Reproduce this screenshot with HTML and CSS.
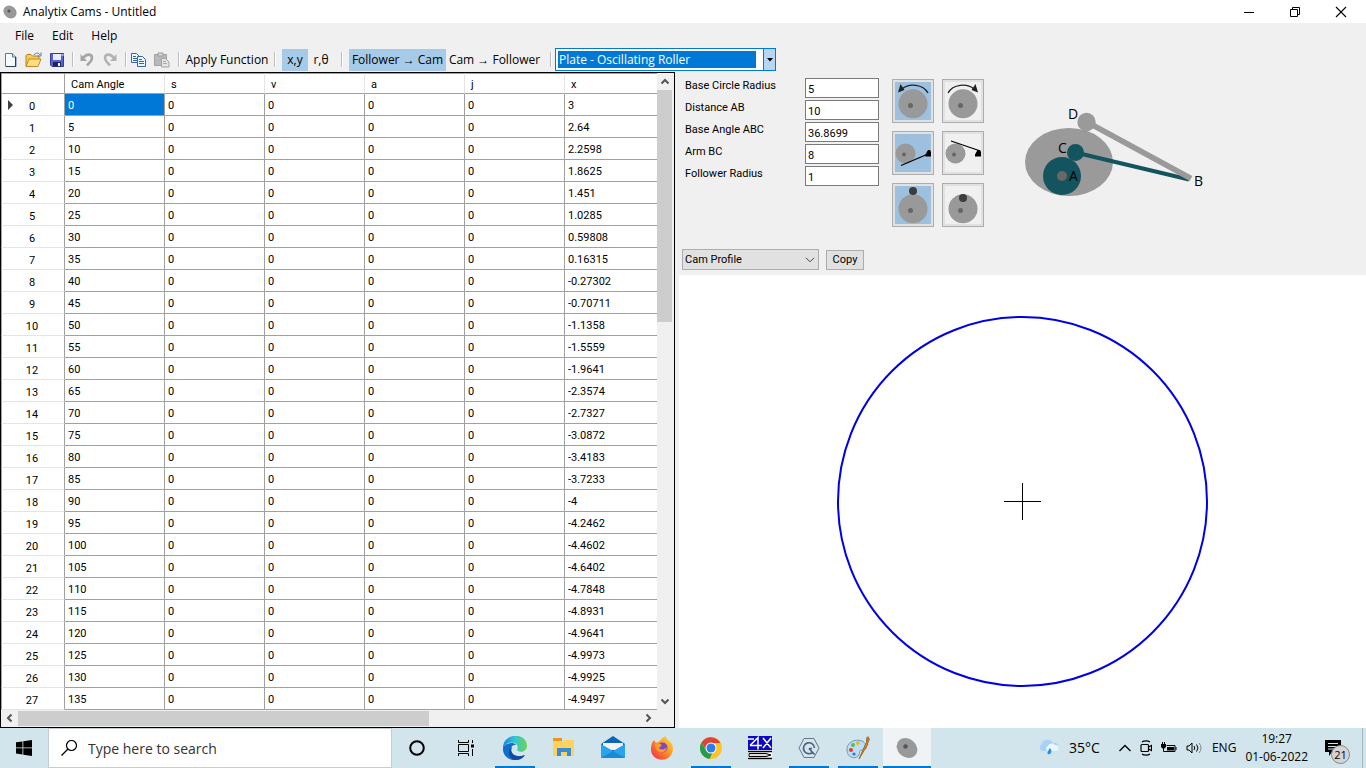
FILE: index.html
```html
<!DOCTYPE html>
<html lang="en">
<head>
<meta charset="utf-8">
<title>Analytix Cams - Untitled</title>
<link rel="stylesheet" href="styles.css">
</head>
<body>
<header class="titlebar">
  <svg class="app-icon" width="14" height="14" viewBox="0 0 14 14"><ellipse cx="7" cy="7" rx="7" ry="6" transform="rotate(40 7 7)" fill="#999"/><circle cx="6" cy="6" r="1.6" fill="#555"/></svg>
  <h1 class="title">Analytix Cams - Untitled</h1>
  <div class="window-buttons">
    <button aria-label="Minimize"><svg width="12" height="12" viewBox="0 0 12 12"><path d="M1 6.5h10" stroke="#000"/></svg></button>
    <button aria-label="Restore"><svg width="12" height="12" viewBox="0 0 12 12" fill="none" stroke="#000"><path d="M1.5 3.5h7v7h-7zM3.500 3V1.500h7v7H9"/></svg></button>
    <button aria-label="Close"><svg width="12" height="12" viewBox="0 0 12 12"><path d="M1 1l10 10M11 1L1 11" stroke="#000" stroke-width="1.1"/></svg></button>
  </div>
</header>
<nav class="menubar"><button>File</button><button>Edit</button><button>Help</button></nav>
<div class="toolbar">
  <div class="tool-group files">
    <button aria-label="New"><svg width="16" height="16" viewBox="0 0 16 16"><path d="M2.500 1.500h7l3.500 3.500v9.500H2.500z" fill="#f6fbff" stroke="#5d7890"/><path d="M9.500 1.500V5H13" fill="#cfe0ee" stroke="#5d7890"/><path d="M12.500 5v9.500H3" fill="none" stroke="#24415c"/></svg></button>
    <button aria-label="Open"><svg width="18" height="16" viewBox="0 0 18 16"><path d="M1 14V3.500l1-1h4l1.500 1.500H14v3" fill="#f5c95a" stroke="#b98218"/><path d="M1 14.500L4 7h12l-3 7.500z" fill="#ffdd82" stroke="#c28b1c"/><path d="M9 3c2-3 5-2 6 0M16 .5V4h-3.500" fill="none" stroke="#507da7"/></svg></button>
    <button aria-label="Save"><svg width="16" height="16" viewBox="0 0 16 16"><path d="M1.500 1.500h13v13H3l-1.500-1.500z" fill="#5963ce" stroke="#343b9b"/><path d="M4 2h8v6H4z" fill="#e5ecfb"/><path d="M4 10h8v4.500H4z" fill="#1c245f"/><path d="M9 11h2v3H9z" fill="#fff"/><path d="M12.500 2h2v2h-2z" fill="#aeb8ff"/></svg></button>
  </div>
  <span class="sep"></span>
  <div class="tool-group history">
    <button aria-label="Undo"><svg width="16" height="16" viewBox="0 0 16 16"><path d="M4 6c4-5 9-4 9 0 0 3-2 4-5 7.500" fill="none" stroke="#a5a5a5" stroke-width="2.600"/><path d="M1.500 2v7h6.500z" fill="#a5a5a5"/></svg></button>
    <button aria-label="Redo"><svg width="16" height="16" viewBox="0 0 16 16"><path d="M12 6C8 1 3 2 3 6c0 3 2 4 5 7.500" fill="none" stroke="#b3b3b3" stroke-width="2.600"/><path d="M14.500 2v7H8z" fill="#b3b3b3"/></svg></button>
  </div>
  <span class="sep"></span>
  <div class="tool-group clip">
    <button aria-label="Copy cells"><svg width="16" height="16" viewBox="0 0 16 16" stroke="#3267a8"><path d="M.5 1.500h5l3 3v6h-8z" fill="#eef6ff"/><path d="M2 4.500h3M2 6.500h4M2 8.500h4" fill="none"/><path d="M6.500 4.500h5l3 3v7h-8z" fill="#eef6ff"/><path d="M8 7.500h3M8 9.500h5M8 11.500h5" fill="none"/></svg></button>
    <button aria-label="Paste"><svg width="16" height="16" viewBox="0 0 16 16"><path d="M.5 2.500h12v11h-12z" fill="#b9b9b9" stroke="#a4a4a4"/><path d="M4 1h5v3H4z" fill="#ddd" stroke="#999"/><path d="M7.500 6.500h4l3.500 3.500v5H7.500z" fill="#e4e4e4" stroke="#a4a4a4"/><path d="M9 9.500h3M9 11.500h4" stroke="#aaa"/></svg></button>
  </div>
  <span class="sep"></span>
  <button class="text-tool apply">Apply Function</button>
  <span class="sep"></span>
  <div class="tool-group coords"><button class="text-tool on">x,y</button><button class="text-tool">r,θ</button></div>
  <span class="sep"></span>
  <div class="tool-group direction"><button class="text-tool on">Follower → Cam</button><button class="text-tool">Cam → Follower</button></div>
  <span class="sep"></span>
  <div class="combo">
    <select aria-label="Cam type"><option>Plate - Oscillating Roller</option></select>
    <span class="combo-arrow"><svg width="6" height="4" viewBox="0 0 6 4"><path d="M0 0h6L3 3.500z"/></svg></span>
  </div>
</div>
<main class="workspace">
  <section class="sheet">
    <div class="sheet-view">
      <table class="grid">
        <colgroup><col class="index-col"><col class="value-col"><col class="value-col"><col class="value-col"><col class="value-col"><col class="value-col"><col></colgroup>
        <thead><tr><td></td><th scope="col">Cam Angle</th><th scope="col">s</th><th scope="col">v</th><th scope="col">a</th><th scope="col">j</th><th scope="col">x</th></tr></thead>
        <tbody>
<tr class="current"><th scope="row">0</th><td class="selected">0</td><td>0</td><td>0</td><td>0</td><td>0</td><td>3</td></tr>
<tr><th scope="row">1</th><td>5</td><td>0</td><td>0</td><td>0</td><td>0</td><td>2.64</td></tr>
<tr><th scope="row">2</th><td>10</td><td>0</td><td>0</td><td>0</td><td>0</td><td>2.2598</td></tr>
<tr><th scope="row">3</th><td>15</td><td>0</td><td>0</td><td>0</td><td>0</td><td>1.8625</td></tr>
<tr><th scope="row">4</th><td>20</td><td>0</td><td>0</td><td>0</td><td>0</td><td>1.451</td></tr>
<tr><th scope="row">5</th><td>25</td><td>0</td><td>0</td><td>0</td><td>0</td><td>1.0285</td></tr>
<tr><th scope="row">6</th><td>30</td><td>0</td><td>0</td><td>0</td><td>0</td><td>0.59808</td></tr>
<tr><th scope="row">7</th><td>35</td><td>0</td><td>0</td><td>0</td><td>0</td><td>0.16315</td></tr>
<tr><th scope="row">8</th><td>40</td><td>0</td><td>0</td><td>0</td><td>0</td><td>-0.27302</td></tr>
<tr><th scope="row">9</th><td>45</td><td>0</td><td>0</td><td>0</td><td>0</td><td>-0.70711</td></tr>
<tr><th scope="row">10</th><td>50</td><td>0</td><td>0</td><td>0</td><td>0</td><td>-1.1358</td></tr>
<tr><th scope="row">11</th><td>55</td><td>0</td><td>0</td><td>0</td><td>0</td><td>-1.5559</td></tr>
<tr><th scope="row">12</th><td>60</td><td>0</td><td>0</td><td>0</td><td>0</td><td>-1.9641</td></tr>
<tr><th scope="row">13</th><td>65</td><td>0</td><td>0</td><td>0</td><td>0</td><td>-2.3574</td></tr>
<tr><th scope="row">14</th><td>70</td><td>0</td><td>0</td><td>0</td><td>0</td><td>-2.7327</td></tr>
<tr><th scope="row">15</th><td>75</td><td>0</td><td>0</td><td>0</td><td>0</td><td>-3.0872</td></tr>
<tr><th scope="row">16</th><td>80</td><td>0</td><td>0</td><td>0</td><td>0</td><td>-3.4183</td></tr>
<tr><th scope="row">17</th><td>85</td><td>0</td><td>0</td><td>0</td><td>0</td><td>-3.7233</td></tr>
<tr><th scope="row">18</th><td>90</td><td>0</td><td>0</td><td>0</td><td>0</td><td>-4</td></tr>
<tr><th scope="row">19</th><td>95</td><td>0</td><td>0</td><td>0</td><td>0</td><td>-4.2462</td></tr>
<tr><th scope="row">20</th><td>100</td><td>0</td><td>0</td><td>0</td><td>0</td><td>-4.4602</td></tr>
<tr><th scope="row">21</th><td>105</td><td>0</td><td>0</td><td>0</td><td>0</td><td>-4.6402</td></tr>
<tr><th scope="row">22</th><td>110</td><td>0</td><td>0</td><td>0</td><td>0</td><td>-4.7848</td></tr>
<tr><th scope="row">23</th><td>115</td><td>0</td><td>0</td><td>0</td><td>0</td><td>-4.8931</td></tr>
<tr><th scope="row">24</th><td>120</td><td>0</td><td>0</td><td>0</td><td>0</td><td>-4.9641</td></tr>
<tr><th scope="row">25</th><td>125</td><td>0</td><td>0</td><td>0</td><td>0</td><td>-4.9973</td></tr>
<tr><th scope="row">26</th><td>130</td><td>0</td><td>0</td><td>0</td><td>0</td><td>-4.9925</td></tr>
<tr><th scope="row">27</th><td>135</td><td>0</td><td>0</td><td>0</td><td>0</td><td>-4.9497</td></tr>
        </tbody>
      </table>
    </div>
    <div class="vscroll">
      <svg class="arrow" viewBox="0 0 16 16"><path d="M4.500 10L8 6.500l3.500 3.500" /></svg>
      <div class="track"><div class="thumb"></div></div>
      <svg class="arrow" viewBox="0 0 16 16"><path d="M4.500 6L8 9.500 11.500 6"/></svg>
    </div>
    <div class="hscroll">
      <svg class="arrow" viewBox="0 0 16 16"><path d="M10 4.500L6.500 8l3.500 3.500"/></svg>
      <div class="track"><div class="thumb"></div></div>
      <svg class="arrow" viewBox="0 0 16 16"><path d="M6 4.500L9.500 8 6 11.500"/></svg>
    </div>
  </section>
  <section class="design">
    <div class="settings">
      <form class="params">
        <label for="base-radius">Base Circle Radius</label><input id="base-radius" value="5">
        <label for="distance">Distance AB</label><input id="distance" value="10">
        <label for="base-angle">Base Angle ABC</label><input id="base-angle" value="36.8699">
        <label for="arm">Arm BC</label><input id="arm" value="8">
        <label for="follower-radius">Follower Radius</label><input id="follower-radius" value="1">
      </form>
      <div class="modes">
        <button class="on" aria-label="Rotate counterclockwise"><svg viewBox="0 0 36 38"><circle cx="18" cy="21.700" r="14.500" fill="#999"/><circle cx="15.500" cy="23.500" r="2.500" fill="#666662"/><path d="M33 11C28 2 14 1 7 7" fill="none" stroke="#222" stroke-width="1.300"/><path d="M3 10.500L5.500 2l4 6z" fill="#222"/></svg></button>
        <button aria-label="Rotate clockwise"><svg viewBox="0 0 36 38"><circle cx="18" cy="21.700" r="14.500" fill="#999"/><circle cx="15.500" cy="23.500" r="2.500" fill="#666662"/><path d="M3 11C8 2 22 1 29 7" fill="none" stroke="#222" stroke-width="1.300"/><path d="M33 10.500L30.500 2l-4 6z" fill="#222"/></svg></button>
        <button class="on" aria-label="Arm rising"><svg viewBox="0 0 36 38"><circle cx="10.500" cy="19.500" r="10" fill="#999"/><circle cx="9" cy="20.500" r="2" fill="#666662"/><path d="M6 31.500L33 20" stroke="#000" stroke-width="1.300"/><path d="M33 16h2l1 2v4.500h-5.500v-2z"/></svg></button>
        <button aria-label="Arm falling"><svg viewBox="0 0 36 38"><circle cx="10.500" cy="19.500" r="10" fill="#999"/><circle cx="9" cy="20.500" r="2" fill="#666662"/><path d="M6 7l28 9.500" stroke="#000" stroke-width="1.300"/><path d="M32.500 16h2.500l1 2v4.500h-6v-2z"/></svg></button>
        <button class="on" aria-label="External follower"><svg viewBox="0 0 36 38"><circle cx="18" cy="22.700" r="14.500" fill="#999"/><circle cx="15.500" cy="24.500" r="2.500" fill="#666662"/><circle cx="18" cy="5" r="4" fill="#3c3c3c"/></svg></button>
        <button aria-label="Internal follower"><svg viewBox="0 0 36 38"><circle cx="18" cy="22.700" r="14.500" fill="#999"/><circle cx="15.500" cy="24.500" r="2.500" fill="#666662"/><circle cx="18" cy="12" r="4" fill="#3c3c3c"/></svg></button>
      </div>
      <svg class="diagram" width="220" height="120" viewBox="0 0 220 120">
        <ellipse cx="59" cy="72" rx="44" ry="34" fill="#9a9a9a"/>
        <circle cx="52" cy="86" r="19" fill="#14545e"/><circle cx="52" cy="86" r="5" fill="#686864"/>
        <path d="M65.500 62.500L179 89.500" stroke="#14545e" stroke-width="4"/><circle cx="65.500" cy="62.500" r="8.500" fill="#14545e"/>
        <path d="M77 32L181 88.500" stroke="#9a9a9a" stroke-width="5.500"/><circle cx="76.500" cy="32" r="9.200" fill="#9a9a9a"/>
        <text x="58" y="29">D</text><text x="48" y="63">C</text><text x="59" y="91">A</text><text x="184" y="96">B</text>
      </svg>
    </div>
    <div class="plot-bar">
      <div class="plot-select"><select aria-label="Plot"><option>Cam Profile</option></select><svg width="10" height="6" viewBox="0 0 10 6"><path d="M1 .8l4 4 4-4" fill="none" stroke="#444"/></svg></div>
      <button class="copy">Copy</button>
    </div>
    <div class="plot">
      <svg viewBox="0 0 687 453"><circle cx="343.500" cy="226.500" r="184.500" fill="none" stroke="#0000e6" stroke-width="2"/><path d="M325 226.500h37M343.500 208v37" stroke="#000"/></svg>
    </div>
  </section>
</main>
<footer class="taskbar">
  <button class="start" aria-label="Start"><svg width="16" height="16" viewBox="0 0 16 16"><path d="M0 2.300l6.500-.9v6.100H0zM7.300 1.300L16 0v7.500H7.300zM0 8.300h6.500v6.200L0 13.600zM7.300 8.300H16V16l-8.700-1.300z"/></svg></button>
  <label class="search"><svg width="16" height="16" viewBox="0 0 16 16" fill="none" stroke="#000" stroke-width="1.200"><circle cx="10.500" cy="5.500" r="5"/><path d="M7 9L.5 15.500"/></svg><input aria-label="Search" placeholder="Type here to search"></label>
  <div class="apps">
    <button class="app" aria-label="Cortana"><svg width="24" height="24" viewBox="0 0 24 24"><circle cx="12" cy="12" r="6.800" fill="none" stroke="#000" stroke-width="2"/></svg></button>
    <button class="app" aria-label="Task view"><svg width="24" height="24" viewBox="0 0 24 24" fill="none" stroke="#000"><path d="M4.500 4v2.500h10V4M4.500 8.500h10v7h-10zM4.500 20v-2.500h10V20M18.500 4v3M18.500 13v7"/><path d="M17 8.500h3v3h-3z" fill="#000" stroke="none"/></svg></button>
    <button class="app running" aria-label="Edge"><svg width="24" height="24" viewBox="0 0 24 24"><defs><linearGradient id="edge-top"><stop stop-color="#1689d8"/><stop offset=".5" stop-color="#35c4d6"/><stop offset="1" stop-color="#6bd54c"/></linearGradient></defs><path d="M0 12C0-4 24-4 24 10c0 5-6 7-9 5-2-2 1-3-1-6C11 5 3 6 0 12z" fill="url(#edge-top)"/><path d="M0 12c1-4 10-7 13-3-5-1-7 5-3 9 4 3 9 2 12 1-6 10-23 5-22-7z" fill="#0c70cc"/><path d="M9 11c-3 7 4 12 13 8-4 6-14 7-16-1 0-3 1-6 3-7z" fill="#11479c"/></svg></button>
    <button class="app" aria-label="File Explorer"><svg width="24" height="24" viewBox="0 0 24 24"><path d="M1 2h9v4H1z" fill="#e8961e"/><path d="M1 5h10l2-1h9v16H1z" fill="#ffd25e"/><path d="M5 20v-8h14v8h-4v-4H9v4z" fill="#388bd5"/></svg></button>
    <button class="app" aria-label="Mail"><svg width="24" height="24" viewBox="0 0 24 24"><path d="M0 8l12-8 12 8v14H0z" fill="#0b64b5"/><path d="M2 7h20v7H2z" fill="#f4f4f4"/><path d="M0 8l12 7 12-7v14H0z" fill="#2aa3ea"/><path d="M0 22l12-7 12 7z" fill="#168bd8"/></svg></button>
    <button class="app" aria-label="Firefox"><svg width="24" height="24" viewBox="0 0 24 24"><defs><linearGradient id="fire" x1="1" y1="0" x2="0" y2="1"><stop stop-color="#ffe63d"/><stop offset=".5" stop-color="#ff8a22"/><stop offset="1" stop-color="#ee2258"/></linearGradient></defs><path d="M4 4l2 3 4-2c1-2 3-4 6-5-1 4 7 5 7 12 0 16-22 15-22 1 0-4 1-7 3-9z" fill="url(#fire)"/><circle cx="12.500" cy="11.500" r="5" fill="#7649cf"/><path d="M5 8c4-2 5 0 7 1l-3 3c3 3 6 1 8-1-1 8-12 7-12-3z" fill="#ff9a29"/></svg></button>
    <button class="app running" aria-label="Chrome"><svg width="22" height="22" viewBox="0 0 22 22"><circle cx="11" cy="11" r="11" fill="#fbc52a"/><path d="M1.500 5.500A11 11 0 0 1 20.500 6H11l-4.500 7z" fill="#df4335"/><path d="M1.500 5.500L6.500 14l6 1.500L9.500 22A11 11 0 0 1 1.500 5.500z" fill="#249b4e"/><circle cx="11" cy="11" r="5.500" fill="#fff"/><circle cx="11" cy="11" r="4.500" fill="#2f7cec"/></svg></button>
    <button class="app" aria-label="Analytix 4x"><svg width="24" height="24" viewBox="0 0 24 24"><path d="M0 0h24v24H0z" fill="#fff"/><path d="M0 0h24v14H0z" fill="#0909ca"/><path d="M0 3h6M2 9.500L10 1.500v12M2 9.500h12M15 2l8 10M23 2l-8 10" fill="none" stroke="#fff" stroke-width="1.500"/><path d="M0 15.500h24M0 22.500h24" stroke="#000" stroke-width="1.500"/><path d="M1 17.500h17l5 1.500-5 1.500H1z" fill="#ddd" stroke="#000"/></svg></button>
    <button class="app running" aria-label="Q application"><svg width="22" height="22" viewBox="0 0 22 22"><path d="M6 1.500h10L21 11l-5 9.500H6L1 11z" fill="#d4e4f2" stroke="#66798b"/><path d="M14.500 15.500a5.500 5.500 0 1 1 2-4.500M11 11.500l5.500 6M11 11.500h3" fill="none" stroke="#526476" stroke-width="1.700"/></svg></button>
    <button class="app running" aria-label="Paint"><svg width="24" height="24" viewBox="0 0 24 24"><path d="M1 14C0 7 9 2 16 5c6 3 6 9 0 9-4 0-1 3-4 6C8 24 1 21 1 14z" fill="#b9def5" stroke="#699fc4"/><circle cx="5" cy="14" r="2" fill="#e13e38"/><circle cx="7" cy="9" r="2" fill="#64b943"/><circle cx="12" cy="7" r="2" fill="#f4b52b"/><circle cx="8" cy="18" r="1.600" fill="#3874d4"/><path d="M13 23l7-16 2 1z" fill="#d58b29" stroke="#a7661c"/><path d="M20 8V2l2-2 2 3-2 5z" fill="#ad7641"/></svg></button>
    <button class="app running active" aria-label="Analytix Cams"><svg width="22" height="22" viewBox="0 0 22 22"><ellipse cx="11" cy="11" rx="11" ry="9.300" transform="rotate(40 11 11)" fill="#999"/><circle cx="9.500" cy="9.500" r="2.200" fill="#555"/></svg></button>
  </div>
  <div class="tray">
    <button class="weather"><svg width="20" height="18" viewBox="0 0 20 18"><circle cx="7" cy="6" r="5.500" fill="#c4ddf7"/><path d="M3 12a4 4 0 0 1 0-7 6 6 0 0 1 11-1 4 4 0 0 1 2 8z" fill="#a8d1f4"/><path d="M8 12a3 3 0 0 1 1-5 4 4 0 0 1 7-1 3 3 0 0 1 1 6z" fill="#eaf5fe"/><path d="M11 9c5 6-5 9-2 3z" fill="#2493e5"/></svg>35°C</button>
    <button aria-label="Show hidden icons"><svg width="12" height="8" viewBox="0 0 12 8"><path d="M.5 7L6 1.500 11.500 7" fill="none" stroke="#000" stroke-width="1.300"/></svg></button>
    <button aria-label="Meet now"><svg width="12" height="16" viewBox="0 0 12 16" fill="none" stroke="#000" stroke-width="1.200"><rect x="1" y="4.500" width="7.500" height="7" rx="1"/><path d="M8.500 7l3-1.500v5L8.500 9M2 2c2-1.500 6-1.500 8 0M2 14c2 1.500 6 1.500 8 0"/></svg></button>
    <button aria-label="Battery"><svg width="16" height="14" viewBox="0 0 16 14"><path d="M5.500 4.500h8.500v6H4.500" fill="none" stroke="#000"/><path d="M6 6h7v3.500H6zM14.500 6h1v3h-1zM0 3h5v3L3.500 7.500h-2L0 6z"/><path d="M1.500 1v3M3.500 1v3M2.500 7v3.500H5" fill="none" stroke="#000"/></svg></button>
    <button aria-label="Volume"><svg width="17" height="14" viewBox="0 0 17 14" fill="none" stroke="#000"><path d="M1 5h2l3-3v10L3 9H1zM8 5q1.500 2 0 4M10.500 3.500q3 3.500 0 7"/><path d="M13 2q4 5 0 10" stroke="#789"/></svg></button>
    <button class="language">ENG</button>
    <button class="clock"><span>19:27</span><span>01-06-2022</span></button>
    <button class="notices" aria-label="21 notifications"><svg width="16" height="16" viewBox="0 0 16 16"><path d="M0 0h16v12H7l-3 4v-4H0z"/><path d="M3 3.500h10M3 6.500h10M3 9h6" stroke="#d3e5ec"/></svg><span class="badge">21</span></button>
  </div>
</footer>
</body>
</html>
```

FILE: styles.css
```css
* { box-sizing: border-box; }
body { margin: 0; height: 100vh; display: flex; flex-direction: column; overflow: hidden; background: #f0f0f0; color: #000; font: 12px/16px "Open Sans", "Noto Sans", sans-serif; }
button { margin: 0; padding: 0; border: 0; background: none; color: inherit; font: inherit; display: flex; align-items: center; justify-content: center; white-space: nowrap; }
svg { display: block; flex: none; }
select, input { font: inherit; color: inherit; min-width: 0; }

.titlebar { height: 23px; flex: none; display: flex; align-items: center; padding: 0 2px 0 3px; gap: 6px; background: #fff; }
.title { margin: 0; font-size: 12px; font-weight: 400; flex: 1; }
.window-buttons { display: flex; }
.window-buttons button { width: 46px; height: 22px; }

.menubar { height: 24px; flex: none; display: flex; align-items: center; gap: 18px; padding: 1px 0 0 15px; }

.toolbar { height: 25px; flex: none; display: flex; align-items: center; padding: 0 3px; }
.tool-group { display: flex; align-items: center; }
.files { gap: 6px; width: 69px; }
.history { gap: 7px; padding-left: 5px; width: 51px; }
.clip { gap: 7px; padding-left: 4px; width: 51px; }
.sep { width: 2px; height: 15px; flex: none; border-left: 1px solid #bdbdbd; border-right: 1px solid #fff; }
.text-tool { height: 22px; }
.apply { width: 94px; }
.coords { padding-left: 6px; width: 65px; }
.coords button { width: 26px; }
.direction { padding-left: 6px; width: 207px; }
.direction button { width: 97px; }
.on { background: #a6cbe9; }
.combo { width: 221px; height: 23px; margin-left: 3px; display: flex; border: 1px solid #0078d7; background: #fff; }
.combo select { appearance: none; flex: 1; margin: 2px 7px 2px 2px; padding: 1px 1px 0; border: 0; border-radius: 0; background: #0078d7; color: #fff; line-height: 16px; }
.combo-arrow { width: 12px; display: flex; align-items: center; justify-content: center; background: #b5d7f3; border-left: 1px solid #0078d7; }

.workspace { flex: 1; min-height: 0; display: grid; grid-template-columns: minmax(0, 675fr) minmax(0, 691fr); grid-template-rows: minmax(0, 1fr); font: 11px/16px Roboto, "Liberation Sans", sans-serif; }
.sheet { border: 1px solid #000; display: grid; grid-template-columns: minmax(0, 1fr) 17px; grid-template-rows: minmax(0, 1fr) 17px; background: #f0f0f0; }
.sheet-view { overflow: hidden; background: #fff; }
.grid { width: 100%; table-layout: fixed; border-collapse: separate; border-spacing: 0; }
.index-col { width: 64px; }
.value-col { width: 100px; }
.grid td, .grid th { height: 22px; padding: 2px 3px 0; border-right: 1px solid #a0a0a0; border-bottom: 1px solid #a0a0a0; text-align: left; font-weight: 400; line-height: 16px; }
.grid thead th, .grid thead td { height: 21px; padding-left: 6px; border-top: 1px solid #a0a0a0; }
.grid thead th { border-right-color: #e5e5e5; }
.grid thead td { border-left: 1px solid #a0a0a0; }
.grid tbody th { padding: 5px 2px 0 0; text-align: center; border-bottom-color: #e5e5e5; border-left: 1px solid #a0a0a0; }
.grid tr > :last-child { border-right: 0; }
.grid .selected { background: #0078d7; color: #fff; }
.current th { position: relative; }
.current th::before { content: ""; position: absolute; left: 6px; top: 6px; border: 5px solid transparent; border-left-color: #404040; border-right: 0; }
.vscroll { display: flex; flex-direction: column; }
.hscroll { grid-column: 1; display: flex; }
.arrow { width: 17px; height: 16px; fill: none; stroke: #555; stroke-width: 2; }
.vscroll .arrow { width: 16px; height: 17px; }
.track { flex: 1; }
.thumb { background: #cdcdcd; }
.vscroll .thumb { height: 38.4%; margin-right: 2px; }
.hscroll .thumb { width: 66%; height: 15px; margin-top: 1px; }

.design { display: flex; flex-direction: column; min-width: 0; }
.settings { flex: none; height: 172px; display: flex; align-items: flex-start; padding: 6px 0 0 10px; }
.params { display: grid; grid-template-columns: 120px 74px; grid-auto-rows: 20px; row-gap: 2px; margin-right: 13px; }
.params input { height: 20px; padding: 2px 2px 0; border: 1px solid #7a7a7a; border-radius: 0; background: #fff; }
.modes { display: grid; grid-template-columns: 42px 42px; gap: 8px; padding-top: 1px; margin-right: 26px; }
.modes button { height: 44px; border: 1px solid #adadad; background: #e1e1e1; }
.modes svg { width: 36px; height: 38px; background: #f0f0f0; }
.modes .on svg { background: #9cc0de; }
.diagram { margin-top: 12px; font: 14px "Open Sans", sans-serif; }
.plot-bar { flex: none; height: 31px; display: flex; align-items: center; gap: 7px; padding: 0 7px; }
.plot-select { width: 137px; height: 21px; display: flex; align-items: center; padding-right: 3px; border: 1px solid #adadad; background: #e1e1e1; }
.plot-select select { appearance: none; flex: 1; height: 19px; padding: 1px 2px 0; border: 0; background: none; }
.copy { width: 38px; height: 20px; padding-top: 1px; border: 1px solid #adadad; background: #e1e1e1; }
.plot { flex: 1; min-height: 0; margin-left: 4px; background: #fff; }
.plot svg { width: 100%; height: 100%; }

.taskbar { height: 40px; flex: none; display: flex; background: #d2e5ec; }
.start { width: 48px; }
.search { flex: 0 1 344px; display: flex; align-items: center; gap: 11px; padding-left: 12px; border: 1px solid #c6cdd0; background: #fff; }
.search input { flex: 1; border: 0; padding: 2px 0 0; outline: 0; font-size: 14px; line-height: 20px; }
.search input::placeholder { color: #333; opacity: 1; }
.apps { display: flex; gap: 1px; margin-left: 1px; }
.app { width: 48px; height: 40px; }
.running { background: linear-gradient(#0078d7, #0078d7) center bottom / 40px 2px no-repeat; }
.active { background-size: 48px 2px; background-color: #f0f3f6; }
.tray { margin-left: auto; display: flex; align-items: center; gap: 9px; padding-right: 3px; }
.weather { gap: 10px; font-size: 14px; margin-right: 10px; }
.clock { flex-direction: column; line-height: 18px; }
.notices { position: relative; width: 46px; height: 40px; border-right: 1px solid #a5b7bd; justify-content: flex-start; padding-left: 8px; }
.badge { position: absolute; left: 14px; top: 17px; width: 19px; height: 19px; border: 1px solid #888; border-radius: 50%; background: #d4d4d4; font-size: 11px; line-height: 17px; }
```
